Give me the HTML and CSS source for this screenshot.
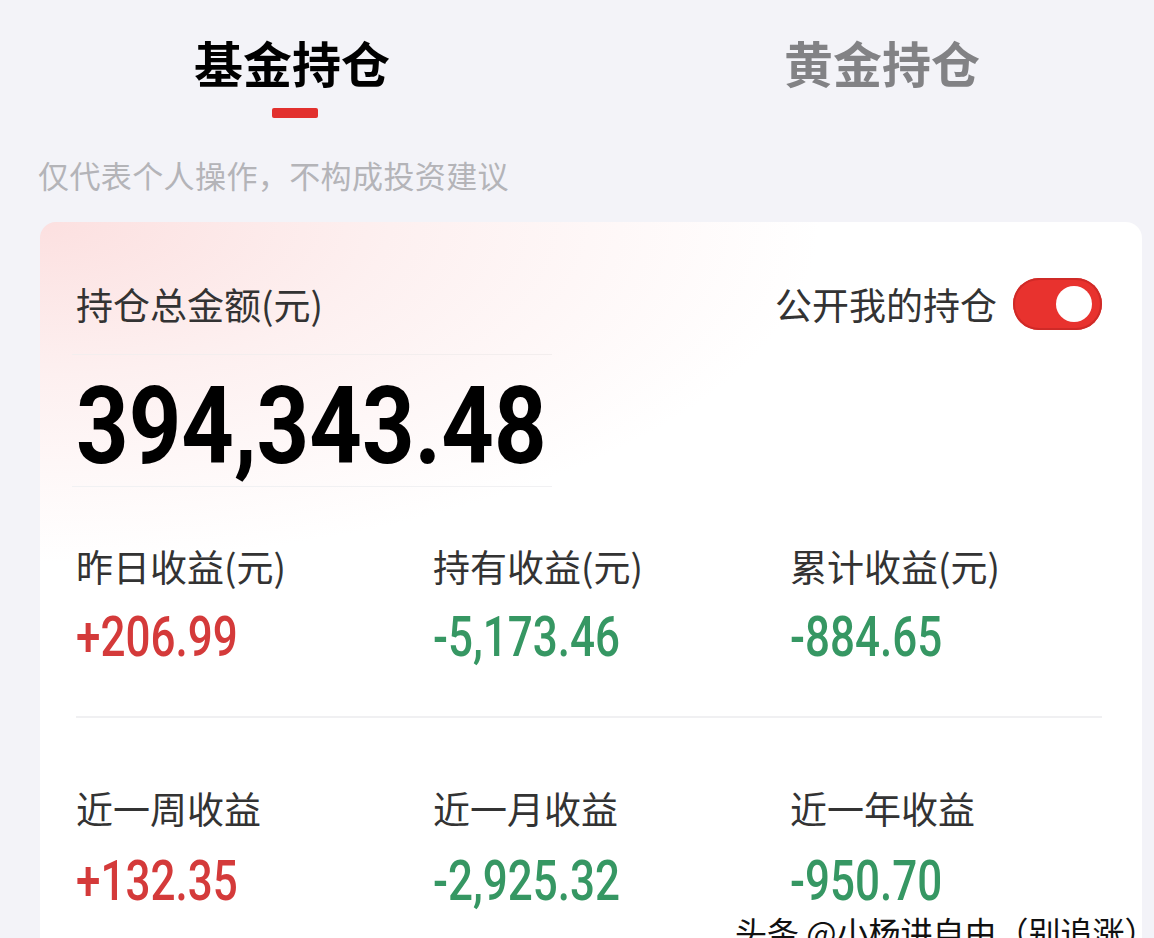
FILE: index.html
```html
<!DOCTYPE html>
<html lang="zh-CN">
<head>
    <meta charset="UTF-8">
    <meta name="viewport" content="width=device-width, initial-scale=1.0">
    <title>基金持仓</title>
    <link rel="stylesheet" href="styles.css">
</head>
<body>
    <div class="tabs">
        <div class="tab active">
            <div class="tab-name">基金持仓</div>
            <div class="tab-bar"></div>
        </div>
        <div class="tab">
            <div class="tab-name">黄金持仓</div>
        </div>
    </div>

    <div class="notice">仅代表个人操作，不构成投资建议</div>

    <div class="card">
        <div class="card-head">
            <div class="label">持仓总金额(元)</div>
            <div class="share">
                <span class="label">公开我的持仓</span>
                <span class="switch on"><span class="knob"></span></span>
            </div>
        </div>

        <div class="total"><span class="num">394,343.48</span></div>

        <div class="stats">
            <div class="stat">
                <div class="label">昨日收益(元)</div>
                <div class="value up"><span class="num">+206.99</span></div>
            </div>
            <div class="stat">
                <div class="label">持有收益(元)</div>
                <div class="value down"><span class="num">-5,173.46</span></div>
            </div>
            <div class="stat">
                <div class="label">累计收益(元)</div>
                <div class="value down"><span class="num">-884.65</span></div>
            </div>
        </div>

        <div class="divider"></div>

        <div class="stats period">
            <div class="stat">
                <div class="label">近一周收益</div>
                <div class="value up"><span class="num">+132.35</span></div>
                <div class="rate up"><span class="num">+0.30%</span></div>
            </div>
            <div class="stat">
                <div class="label">近一月收益</div>
                <div class="value down"><span class="num">-2,925.32</span></div>
                <div class="rate down"><span class="num">-0.71%</span></div>
            </div>
            <div class="stat">
                <div class="label">近一年收益</div>
                <div class="value down"><span class="num">-950.70</span></div>
            </div>
        </div>
    </div>

    <div class="watermark">头条 @小杨讲自由（别追涨）</div>
</body>
</html>
```

FILE: styles.css
```css
/* Base */
* {
    margin: 0;
    padding: 0;
    box-sizing: border-box;
}
body {
    font-family: "Noto Sans CJK SC", "Noto Sans", sans-serif;
    background: #f3f3f8;
    color: #333;
    padding-top: 32px;
    height: 938px;
    overflow: hidden;
    position: relative;
}
/* Tabs */
.tabs {
    display: flex;
    gap: 290px;
    padding-left: 142px;
}
.tab {
    width: 300px;
    display: flex;
    flex-direction: column;
    align-items: center;
}
.tab-name {
    font-size: 49px;
    line-height: 59px;
    font-weight: 700;
    color: #828285;
}
.tab.active .tab-name {
    color: #000;
}
.tab-bar {
    width: 46px;
    height: 10px;
    margin: 17px 0 0 6px;
    background: #e2302e;
    border-radius: 2px;
}
.notice {
    margin: 37px 0 0 38px;
    font-size: 31px;
    line-height: 40px;
    letter-spacing: 0.4px;
    color: #b4b4b8;
}
/* Card */
.card {
    margin: 27px 12px 0 40px;
    padding: 56px 40px 0 36px;
    height: 760px;
    border-radius: 16px;
    background:
        radial-gradient(ellipse 780px 340px at 0 0, #fce0e0 0%, rgba(252, 232, 232, 0.65) 45%, rgba(255, 255, 255, 0) 100%),
        #fff;
}
.label {
    font-size: 37px;
    line-height: 44px;
    color: #333;
}
.card-head {
    display: flex;
    justify-content: space-between;
    align-items: center;
    height: 52px;
}
.share {
    display: flex;
    align-items: center;
    gap: 16px;
}
.switch {
    width: 89px;
    height: 52px;
    border-radius: 26px;
    background: #e8322e;
    box-shadow: inset 0 0 0 2px #cf2a27;
    display: flex;
    align-items: center;
    justify-content: flex-end;
    padding-right: 10px;
}
.knob {
    width: 36px;
    height: 36px;
    border-radius: 50%;
    background: #fff;
}
.num {
    display: inline-block;
    font-family: Roboto, "Liberation Sans", sans-serif;
    transform-origin: 0 50%;
    transform: scaleX(0.8);
    white-space: nowrap;
}
.total {
    margin: 24px 0 0 -4px;
    padding: 7px 0 6px 4px;
    width: 480px;
    font-weight: 700;
    font-size: 108px;
    line-height: 108px;
    color: #000;
    border-top: 1px solid #f3eeee;
    border-bottom: 1px solid #f1f1f3;
}
.total .num {
    transform: scaleX(0.85);
}
/* Stats */
.stats {
    display: grid;
    grid-template-columns: 357px 357px 1fr;
    margin-top: 57px;
}
.value {
    margin-top: 16px;
    font-size: 55px;
    line-height: 56px;
    font-weight: 500;
}
.rate {
    margin-top: 22px;
    font-size: 44px;
    line-height: 48px;
    font-weight: 500;
}
.up {
    color: #d43a3a;
}
.down {
    color: #369763;
}
.divider {
    height: 2px;
    background: #f0f0f2;
    margin-top: 51px;
}
.period {
    margin-top: 68px;
}
.period .value {
    margin-top: 18px;
}
/* Overlay caption */
.watermark {
    position: absolute;
    left: 735px;
    top: 914px;
    font-size: 32px;
    line-height: 34px;
    white-space: nowrap;
    color: #111;
    text-shadow: 0 0 3px #fff, 0 0 3px #fff;
}
```
